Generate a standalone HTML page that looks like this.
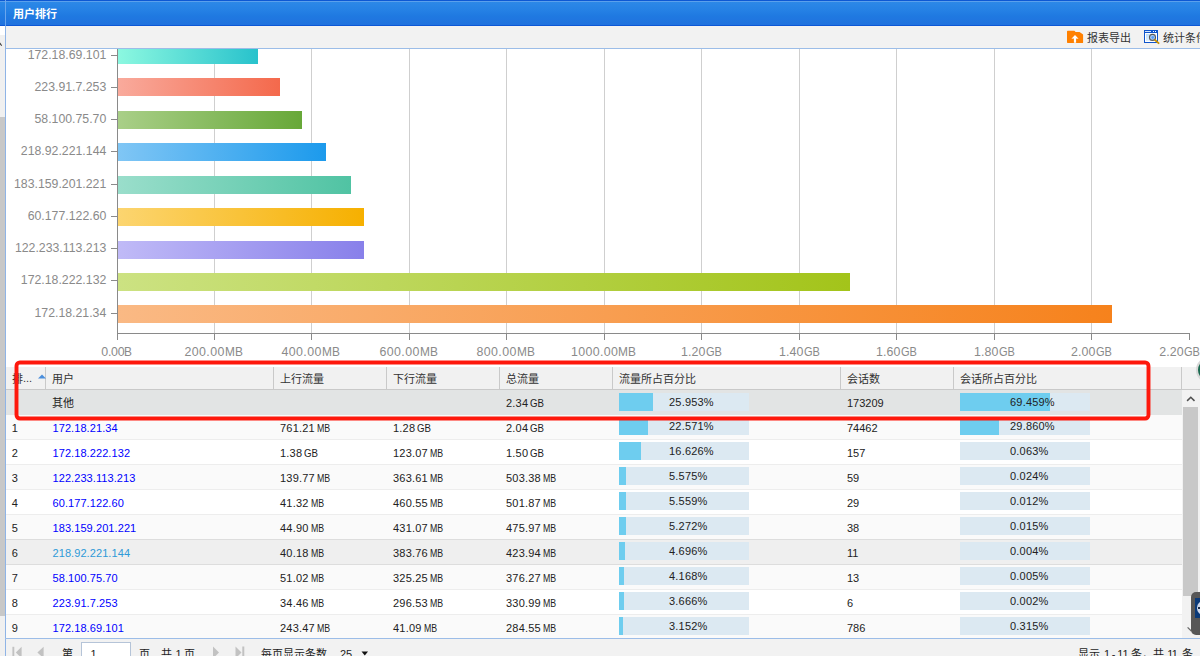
<!DOCTYPE html>
<html><head><meta charset="utf-8"><title>用户排行</title>
<style>
html,body{margin:0;padding:0}
body{width:1200px;height:656px;position:relative;overflow:hidden;background:#fff;font-family:"Liberation Sans",sans-serif}
.t{position:absolute;white-space:nowrap;line-height:1;font-family:"Liberation Sans",sans-serif}
svg{overflow:visible}
svg text{font-family:"Liberation Sans","Noto Sans CJK SC",sans-serif}
.v{display:inline-block;transform:scaleX(.96);transform-origin:0 50%;margin-right:-0.7px}
.vg{transform:scaleX(.89);margin-right:-2px}
.u{display:inline-block;transform:scaleX(.8);transform-origin:0 50%}
.g{transform:scaleX(.88)}
</style></head><body>
<div style="position:absolute;left:0px;top:0px;width:1200px;height:26px;background:linear-gradient(#0d58d3 0,#0d58d3 1px,#5aa0ec 1px,#5aa0ec 2px,#2c88e7 2px,#2480e4 11px,#1f79e1 16px,#2072de 25px,#0c57d6 25px);"></div>
<div style="position:absolute;left:5px;top:0px;width:1px;height:26px;background:#6aa6ee;"></div>
<svg style="position:absolute;left:13.00px;top:8.42px;" width="44.00" height="13.20"><text x="0" y="9.68" font-size="11" font-weight="bold" fill="#fff">用户排行</text></svg>
<div style="position:absolute;left:6px;top:26px;width:1194px;height:22px;background:#f2f2f2;"></div>
<div style="position:absolute;left:5px;top:48px;width:1195px;height:1px;background:#9cbde8;"></div>
<div style="position:absolute;left:0px;top:26px;width:5px;height:9px;background:#fff;"></div>
<div style="position:absolute;left:0px;top:35px;width:5px;height:82px;background:#f0f0f0;"></div>
<div style="position:absolute;left:0px;top:117px;width:5px;height:499px;background:#c8c8c8;"></div>
<div style="position:absolute;left:0px;top:616px;width:5px;height:40px;background:#f0f0f0;"></div>
<div style="position:absolute;left:5px;top:26px;width:1px;height:630px;background:#8fb4e6;"></div>
<svg style="position:absolute;left:0;top:40px" width="5" height="8" viewBox="0 0 5 8"><path d="M-1.5 6.2 L0.2 3.6 L1.7 5.8" stroke="#444" stroke-width="1.1" fill="none"/></svg>
<svg style="position:absolute;left:1066px;top:29px" width="18" height="16" viewBox="1066 29 18 16">
<path d="M1067 31.6 Q1067 30.8 1067.8 30.8 L1074.4 30.8 L1075.6 32 L1079.6 32 L1083.1 34.6 L1083.1 42.4 Q1083.1 43 1082.4 43 L1067.7 43 Q1067 43 1067 42.3 Z" fill="#ff8000"/>
<path d="M1075 35 L1078.6 38.8 L1076.1 38.4 L1076.1 42.8 L1073.9 42.8 L1073.9 38.4 L1071.4 38.8 Z" fill="#fff"/>
</svg>
<svg style="position:absolute;left:1143px;top:29px" width="18" height="16" viewBox="1143 29 18 16">
<defs><linearGradient id="wg" x1="0" y1="0" x2="1" y2="1"><stop offset="0" stop-color="#b8dcfa"/><stop offset="1" stop-color="#fff"/></linearGradient></defs>
<rect x="1144" y="30" width="14" height="13" fill="#0f55cc"/>
<rect x="1145" y="33" width="12" height="9" fill="#fff"/>
<rect x="1146" y="34" width="10" height="7" fill="url(#wg)"/>
<rect x="1145" y="31" width="6" height="1" fill="#cfe4ff"/>
<rect x="1153" y="31" width="1" height="1" fill="#fff"/><rect x="1155" y="31" width="1" height="1" fill="#fff"/>
<circle cx="1152.5" cy="37.4" r="3.0" fill="#b4d8ff" stroke="#5a5a5a" stroke-width="1.1"/>
<circle cx="1152.7" cy="37.5" r="1.4" fill="#5c9ef6"/>
<path d="M1155 40 L1158.6 43.2" stroke="#c89000" stroke-width="1.8" stroke-linecap="round"/>
</svg>
<svg style="position:absolute;left:1087.00px;top:31.72px;" width="44.00" height="13.20"><text x="0" y="9.68" font-size="11" fill="#333">报表导出</text></svg>
<svg style="position:absolute;left:1162.50px;top:31.72px;" width="44.00" height="13.20"><text x="0" y="9.68" font-size="11" fill="#333">统计条件</text></svg>
<div style="position:absolute;left:6px;top:49px;width:1194px;height:318px;overflow:hidden;background:#fff">
<div style="position:absolute;left:-6px;top:-49px;width:1200px;height:656px">
<div style="position:absolute;left:214px;top:40px;width:1px;height:293px;background:#cfcfcf;"></div>
<div style="position:absolute;left:311px;top:40px;width:1px;height:293px;background:#cfcfcf;"></div>
<div style="position:absolute;left:409px;top:40px;width:1px;height:293px;background:#cfcfcf;"></div>
<div style="position:absolute;left:506px;top:40px;width:1px;height:293px;background:#cfcfcf;"></div>
<div style="position:absolute;left:604px;top:40px;width:1px;height:293px;background:#cfcfcf;"></div>
<div style="position:absolute;left:701px;top:40px;width:1px;height:293px;background:#cfcfcf;"></div>
<div style="position:absolute;left:799px;top:40px;width:1px;height:293px;background:#cfcfcf;"></div>
<div style="position:absolute;left:896px;top:40px;width:1px;height:293px;background:#cfcfcf;"></div>
<div style="position:absolute;left:994px;top:40px;width:1px;height:293px;background:#cfcfcf;"></div>
<div style="position:absolute;left:1091px;top:40px;width:1px;height:293px;background:#cfcfcf;"></div>
<div style="position:absolute;left:117px;top:40px;width:1px;height:294px;background:#8a8a8a;"></div>
<div style="position:absolute;left:117px;top:333px;width:1073px;height:1px;background:#8a8a8a;"></div>
<div style="position:absolute;left:117px;top:333px;width:1px;height:7px;background:#8a8a8a;"></div>
<div style="position:absolute;left:214px;top:333px;width:1px;height:7px;background:#8a8a8a;"></div>
<div style="position:absolute;left:311px;top:333px;width:1px;height:7px;background:#8a8a8a;"></div>
<div style="position:absolute;left:409px;top:333px;width:1px;height:7px;background:#8a8a8a;"></div>
<div style="position:absolute;left:506px;top:333px;width:1px;height:7px;background:#8a8a8a;"></div>
<div style="position:absolute;left:604px;top:333px;width:1px;height:7px;background:#8a8a8a;"></div>
<div style="position:absolute;left:701px;top:333px;width:1px;height:7px;background:#8a8a8a;"></div>
<div style="position:absolute;left:799px;top:333px;width:1px;height:7px;background:#8a8a8a;"></div>
<div style="position:absolute;left:896px;top:333px;width:1px;height:7px;background:#8a8a8a;"></div>
<div style="position:absolute;left:994px;top:333px;width:1px;height:7px;background:#8a8a8a;"></div>
<div style="position:absolute;left:1091px;top:333px;width:1px;height:7px;background:#8a8a8a;"></div>
<div style="position:absolute;left:1189px;top:333px;width:1px;height:7px;background:#8a8a8a;"></div>
<div style="position:absolute;left:118px;top:46px;width:140px;height:17.8px;background:linear-gradient(90deg,#8cf8e0,#28c2cc)"></div>
<div style="position:absolute;left:111px;top:55px;width:6px;height:1px;background:#8a8a8a;"></div>
<div class="t" style="right:1093.70px;top:48.59px;font-size:12.3px;color:#8a8a8a;">172.18.69.101</div>
<div style="position:absolute;left:118px;top:78px;width:162px;height:17.8px;background:linear-gradient(90deg,#f9aa9c,#f4694c)"></div>
<div style="position:absolute;left:111px;top:87px;width:6px;height:1px;background:#8a8a8a;"></div>
<div class="t" style="right:1093.70px;top:80.59px;font-size:12.3px;color:#8a8a8a;">223.91.7.253</div>
<div style="position:absolute;left:118px;top:111px;width:184px;height:17.8px;background:linear-gradient(90deg,#a9cf88,#67a838)"></div>
<div style="position:absolute;left:111px;top:119px;width:6px;height:1px;background:#8a8a8a;"></div>
<div class="t" style="right:1093.70px;top:112.59px;font-size:12.3px;color:#8a8a8a;">58.100.75.70</div>
<div style="position:absolute;left:118px;top:143px;width:208px;height:17.8px;background:linear-gradient(90deg,#80c6f5,#1c9aec)"></div>
<div style="position:absolute;left:111px;top:151px;width:6px;height:1px;background:#8a8a8a;"></div>
<div class="t" style="right:1093.70px;top:144.59px;font-size:12.3px;color:#8a8a8a;">218.92.221.144</div>
<div style="position:absolute;left:118px;top:176px;width:233px;height:17.8px;background:linear-gradient(90deg,#9adecb,#50c3a3)"></div>
<div style="position:absolute;left:111px;top:184px;width:6px;height:1px;background:#8a8a8a;"></div>
<div class="t" style="right:1093.70px;top:177.59px;font-size:12.3px;color:#8a8a8a;">183.159.201.221</div>
<div style="position:absolute;left:118px;top:208px;width:246px;height:17.8px;background:linear-gradient(90deg,#fcd570,#f6b000)"></div>
<div style="position:absolute;left:111px;top:216px;width:6px;height:1px;background:#8a8a8a;"></div>
<div class="t" style="right:1093.70px;top:209.59px;font-size:12.3px;color:#8a8a8a;">60.177.122.60</div>
<div style="position:absolute;left:118px;top:241px;width:246px;height:17.8px;background:linear-gradient(90deg,#c0baf7,#8880ea)"></div>
<div style="position:absolute;left:111px;top:248px;width:6px;height:1px;background:#8a8a8a;"></div>
<div class="t" style="right:1093.70px;top:241.59px;font-size:12.3px;color:#8a8a8a;">122.233.113.213</div>
<div style="position:absolute;left:118px;top:273px;width:732px;height:17.8px;background:linear-gradient(90deg,#cce282,#a3c41a)"></div>
<div style="position:absolute;left:111px;top:280px;width:6px;height:1px;background:#8a8a8a;"></div>
<div class="t" style="right:1093.70px;top:273.59px;font-size:12.3px;color:#8a8a8a;">172.18.222.132</div>
<div style="position:absolute;left:118px;top:305px;width:994px;height:17.8px;background:linear-gradient(90deg,#fab984,#f6821c)"></div>
<div style="position:absolute;left:111px;top:313px;width:6px;height:1px;background:#8a8a8a;"></div>
<div class="t" style="right:1093.70px;top:306.59px;font-size:12.3px;color:#8a8a8a;">172.18.21.34</div>
<div class="t" style="left:-33.40px;width:300px;text-align:center;top:346.00px;font-size:12.4px;color:#8a8a8a;"><span style="letter-spacing:-0.3px">0.00</span><span class="v">B</span></div>
<div class="t" style="left:63.60px;width:300px;text-align:center;top:346.00px;font-size:12.4px;color:#8a8a8a;"><span style="letter-spacing:0.37px">200.00</span><span class="v">MB</span></div>
<div class="t" style="left:160.60px;width:300px;text-align:center;top:346.00px;font-size:12.4px;color:#8a8a8a;"><span style="letter-spacing:0.37px">400.00</span><span class="v">MB</span></div>
<div class="t" style="left:258.60px;width:300px;text-align:center;top:346.00px;font-size:12.4px;color:#8a8a8a;"><span style="letter-spacing:0.37px">600.00</span><span class="v">MB</span></div>
<div class="t" style="left:355.60px;width:300px;text-align:center;top:346.00px;font-size:12.4px;color:#8a8a8a;"><span style="letter-spacing:0.37px">800.00</span><span class="v">MB</span></div>
<div class="t" style="left:453.60px;width:300px;text-align:center;top:346.00px;font-size:12.4px;color:#8a8a8a;"><span style="letter-spacing:0.37px">1000.00</span><span class="v">MB</span></div>
<div class="t" style="left:551.30px;width:300px;text-align:center;top:346.00px;font-size:12.4px;color:#8a8a8a;"><span style="letter-spacing:0.1px">1.20</span><span class="v vg">GB</span></div>
<div class="t" style="left:649.30px;width:300px;text-align:center;top:346.00px;font-size:12.4px;color:#8a8a8a;"><span style="letter-spacing:0.1px">1.40</span><span class="v vg">GB</span></div>
<div class="t" style="left:746.30px;width:300px;text-align:center;top:346.00px;font-size:12.4px;color:#8a8a8a;"><span style="letter-spacing:0.1px">1.60</span><span class="v vg">GB</span></div>
<div class="t" style="left:844.30px;width:300px;text-align:center;top:346.00px;font-size:12.4px;color:#8a8a8a;"><span style="letter-spacing:0.1px">1.80</span><span class="v vg">GB</span></div>
<div class="t" style="left:941.30px;width:300px;text-align:center;top:346.00px;font-size:12.4px;color:#8a8a8a;"><span style="letter-spacing:0.1px">2.00</span><span class="v vg">GB</span></div>
<div class="t" style="right:0.40px;top:346.00px;font-size:12.4px;color:#8a8a8a;"><span style="letter-spacing:0.1px">2.20</span><span class="v vg">GB</span></div>
</div></div>
<div style="position:absolute;left:6px;top:367px;width:1194px;height:22px;background:#f1f1f1;"></div>
<div style="position:absolute;left:6px;top:389px;width:1194px;height:1px;background:#c9c9c9;"></div>
<div style="position:absolute;left:45px;top:367px;width:1px;height:22px;background:#c9c9c9;"></div>
<div style="position:absolute;left:273px;top:367px;width:1px;height:22px;background:#c9c9c9;"></div>
<div style="position:absolute;left:386px;top:367px;width:1px;height:22px;background:#c9c9c9;"></div>
<div style="position:absolute;left:499px;top:367px;width:1px;height:22px;background:#c9c9c9;"></div>
<div style="position:absolute;left:612px;top:367px;width:1px;height:22px;background:#c9c9c9;"></div>
<div style="position:absolute;left:840px;top:367px;width:1px;height:22px;background:#c9c9c9;"></div>
<div style="position:absolute;left:953px;top:367px;width:1px;height:22px;background:#c9c9c9;"></div>
<div style="position:absolute;left:1181px;top:367px;width:1px;height:22px;background:#c9c9c9;"></div>
<svg style="position:absolute;left:52.00px;top:372.52px;" width="22.00" height="13.20"><text x="0" y="9.68" font-size="11" fill="#333">用户</text></svg>
<svg style="position:absolute;left:280.00px;top:372.52px;" width="44.00" height="13.20"><text x="0" y="9.68" font-size="11" fill="#333">上行流量</text></svg>
<svg style="position:absolute;left:393.00px;top:372.52px;" width="44.00" height="13.20"><text x="0" y="9.68" font-size="11" fill="#333">下行流量</text></svg>
<svg style="position:absolute;left:506.00px;top:372.52px;" width="33.00" height="13.20"><text x="0" y="9.68" font-size="11" fill="#333">总流量</text></svg>
<svg style="position:absolute;left:619.00px;top:372.52px;" width="77.00" height="13.20"><text x="0" y="9.68" font-size="11" fill="#333">流量所占百分比</text></svg>
<svg style="position:absolute;left:847.00px;top:372.52px;" width="33.00" height="13.20"><text x="0" y="9.68" font-size="11" fill="#333">会话数</text></svg>
<svg style="position:absolute;left:960.00px;top:372.52px;" width="77.00" height="13.20"><text x="0" y="9.68" font-size="11" fill="#333">会话所占百分比</text></svg>
<svg style="position:absolute;left:11.50px;top:372.52px;" width="11.00" height="13.20"><text x="0" y="9.68" font-size="11" fill="#333">排</text></svg>
<div class="t" style="left:23.00px;top:373.09px;font-size:11px;color:#333;">...</div>
<svg style="position:absolute;left:37.5px;top:374.3px" width="8" height="5" viewBox="0 0 8 5"><path d="M0 4.6 L4 0.4 L8 4.6 Z" fill="#4a8edc"/></svg>
<div style="position:absolute;left:6px;top:390px;width:1176px;height:25px;background:#e2e4e4;"></div>
<svg style="position:absolute;left:52.00px;top:397.12px;" width="22.00" height="13.20"><text x="0" y="9.68" font-size="11" fill="#222">其他</text></svg>
<div class="t" style="left:506.00px;top:398.19px;font-size:11px;color:#222;"><span style="letter-spacing:0.2px;word-spacing:-1.2px">2.34 </span><span class="u g">GB</span></div>
<div class="t" style="left:847.00px;top:398.19px;font-size:11px;color:#222;">173209</div>
<div style="position:absolute;left:619px;top:393px;width:130px;height:18px;background:#dce9f2;"></div>
<div style="position:absolute;left:619px;top:393px;width:34px;height:18px;background:#6ecdef;"></div>
<div class="t" style="left:669.00px;top:396.69px;font-size:11px;color:#222;letter-spacing:0.2px;">25.953%</div>
<div style="position:absolute;left:960px;top:393px;width:130px;height:18px;background:#dce9f2;"></div>
<div style="position:absolute;left:960px;top:393px;width:90px;height:18px;background:#6ecdef;"></div>
<div class="t" style="left:1010.00px;top:396.69px;font-size:11px;color:#222;letter-spacing:0.2px;">69.459%</div>
<div style="position:absolute;left:6px;top:415px;width:1176px;height:24px;background:#fafafa;"></div>
<div style="position:absolute;left:6px;top:439px;width:1176px;height:1px;background:#ededed;"></div>
<div class="t" style="left:11.80px;top:423.49px;font-size:11px;color:#222;">1</div>
<div class="t" style="left:52.50px;top:423.49px;font-size:11px;color:#0000ff;letter-spacing:0.08px;">172.18.21.34</div>
<div class="t" style="left:280.00px;top:423.49px;font-size:11px;color:#222;"><span style="letter-spacing:0.2px;word-spacing:-1.2px">761.21 </span><span class="u">MB</span></div>
<div class="t" style="left:393.00px;top:423.49px;font-size:11px;color:#222;"><span style="letter-spacing:0.2px;word-spacing:-1.2px">1.28 </span><span class="u g">GB</span></div>
<div class="t" style="left:506.00px;top:423.49px;font-size:11px;color:#222;"><span style="letter-spacing:0.2px;word-spacing:-1.2px">2.04 </span><span class="u g">GB</span></div>
<div style="position:absolute;left:619px;top:417px;width:130px;height:18px;background:#dce9f2;"></div>
<div style="position:absolute;left:619px;top:417px;width:29px;height:18px;background:#6ecdef;"></div>
<div class="t" style="left:669.00px;top:420.69px;font-size:11px;color:#222;letter-spacing:0.2px;">22.571%</div>
<div class="t" style="left:847.00px;top:423.49px;font-size:11px;color:#222;">74462</div>
<div style="position:absolute;left:960px;top:417px;width:130px;height:18px;background:#dce9f2;"></div>
<div style="position:absolute;left:960px;top:417px;width:39px;height:18px;background:#6ecdef;"></div>
<div class="t" style="left:1010.00px;top:420.69px;font-size:11px;color:#222;letter-spacing:0.2px;">29.860%</div>
<div style="position:absolute;left:6px;top:440px;width:1176px;height:24px;background:#fff;"></div>
<div style="position:absolute;left:6px;top:464px;width:1176px;height:1px;background:#ededed;"></div>
<div class="t" style="left:11.80px;top:448.49px;font-size:11px;color:#222;">2</div>
<div class="t" style="left:52.50px;top:448.49px;font-size:11px;color:#0000ff;letter-spacing:0.08px;">172.18.222.132</div>
<div class="t" style="left:280.00px;top:448.49px;font-size:11px;color:#222;"><span style="letter-spacing:0.2px;word-spacing:-1.2px">1.38 </span><span class="u g">GB</span></div>
<div class="t" style="left:393.00px;top:448.49px;font-size:11px;color:#222;"><span style="letter-spacing:0.2px;word-spacing:-1.2px">123.07 </span><span class="u">MB</span></div>
<div class="t" style="left:506.00px;top:448.49px;font-size:11px;color:#222;"><span style="letter-spacing:0.2px;word-spacing:-1.2px">1.50 </span><span class="u g">GB</span></div>
<div style="position:absolute;left:619px;top:442px;width:130px;height:18px;background:#dce9f2;"></div>
<div style="position:absolute;left:619px;top:442px;width:22px;height:18px;background:#6ecdef;"></div>
<div class="t" style="left:669.00px;top:445.69px;font-size:11px;color:#222;letter-spacing:0.2px;">16.626%</div>
<div class="t" style="left:847.00px;top:448.49px;font-size:11px;color:#222;">157</div>
<div style="position:absolute;left:960px;top:442px;width:130px;height:18px;background:#dce9f2;"></div>
<div style="position:absolute;left:960px;top:442px;width:0px;height:18px;background:#6ecdef;"></div>
<div class="t" style="left:1010.00px;top:445.69px;font-size:11px;color:#222;letter-spacing:0.2px;">0.063%</div>
<div style="position:absolute;left:6px;top:465px;width:1176px;height:24px;background:#fafafa;"></div>
<div style="position:absolute;left:6px;top:489px;width:1176px;height:1px;background:#ededed;"></div>
<div class="t" style="left:11.80px;top:473.49px;font-size:11px;color:#222;">3</div>
<div class="t" style="left:52.50px;top:473.49px;font-size:11px;color:#0000ff;letter-spacing:0.08px;">122.233.113.213</div>
<div class="t" style="left:280.00px;top:473.49px;font-size:11px;color:#222;"><span style="letter-spacing:0.2px;word-spacing:-1.2px">139.77 </span><span class="u">MB</span></div>
<div class="t" style="left:393.00px;top:473.49px;font-size:11px;color:#222;"><span style="letter-spacing:0.2px;word-spacing:-1.2px">363.61 </span><span class="u">MB</span></div>
<div class="t" style="left:506.00px;top:473.49px;font-size:11px;color:#222;"><span style="letter-spacing:0.2px;word-spacing:-1.2px">503.38 </span><span class="u">MB</span></div>
<div style="position:absolute;left:619px;top:467px;width:130px;height:18px;background:#dce9f2;"></div>
<div style="position:absolute;left:619px;top:467px;width:7px;height:18px;background:#6ecdef;"></div>
<div class="t" style="left:669.00px;top:470.69px;font-size:11px;color:#222;letter-spacing:0.2px;">5.575%</div>
<div class="t" style="left:847.00px;top:473.49px;font-size:11px;color:#222;">59</div>
<div style="position:absolute;left:960px;top:467px;width:130px;height:18px;background:#dce9f2;"></div>
<div style="position:absolute;left:960px;top:467px;width:0px;height:18px;background:#6ecdef;"></div>
<div class="t" style="left:1010.00px;top:470.69px;font-size:11px;color:#222;letter-spacing:0.2px;">0.024%</div>
<div style="position:absolute;left:6px;top:490px;width:1176px;height:24px;background:#fff;"></div>
<div style="position:absolute;left:6px;top:514px;width:1176px;height:1px;background:#ededed;"></div>
<div class="t" style="left:11.80px;top:498.49px;font-size:11px;color:#222;">4</div>
<div class="t" style="left:52.50px;top:498.49px;font-size:11px;color:#0000ff;letter-spacing:0.08px;">60.177.122.60</div>
<div class="t" style="left:280.00px;top:498.49px;font-size:11px;color:#222;"><span style="letter-spacing:0.2px;word-spacing:-1.2px">41.32 </span><span class="u">MB</span></div>
<div class="t" style="left:393.00px;top:498.49px;font-size:11px;color:#222;"><span style="letter-spacing:0.2px;word-spacing:-1.2px">460.55 </span><span class="u">MB</span></div>
<div class="t" style="left:506.00px;top:498.49px;font-size:11px;color:#222;"><span style="letter-spacing:0.2px;word-spacing:-1.2px">501.87 </span><span class="u">MB</span></div>
<div style="position:absolute;left:619px;top:492px;width:130px;height:18px;background:#dce9f2;"></div>
<div style="position:absolute;left:619px;top:492px;width:7px;height:18px;background:#6ecdef;"></div>
<div class="t" style="left:669.00px;top:495.69px;font-size:11px;color:#222;letter-spacing:0.2px;">5.559%</div>
<div class="t" style="left:847.00px;top:498.49px;font-size:11px;color:#222;">29</div>
<div style="position:absolute;left:960px;top:492px;width:130px;height:18px;background:#dce9f2;"></div>
<div style="position:absolute;left:960px;top:492px;width:0px;height:18px;background:#6ecdef;"></div>
<div class="t" style="left:1010.00px;top:495.69px;font-size:11px;color:#222;letter-spacing:0.2px;">0.012%</div>
<div style="position:absolute;left:6px;top:515px;width:1176px;height:24px;background:#fafafa;"></div>
<div style="position:absolute;left:6px;top:539px;width:1176px;height:1px;background:#dddddd;"></div>
<div class="t" style="left:11.80px;top:523.49px;font-size:11px;color:#222;">5</div>
<div class="t" style="left:52.50px;top:523.49px;font-size:11px;color:#0000ff;letter-spacing:0.08px;">183.159.201.221</div>
<div class="t" style="left:280.00px;top:523.49px;font-size:11px;color:#222;"><span style="letter-spacing:0.2px;word-spacing:-1.2px">44.90 </span><span class="u">MB</span></div>
<div class="t" style="left:393.00px;top:523.49px;font-size:11px;color:#222;"><span style="letter-spacing:0.2px;word-spacing:-1.2px">431.07 </span><span class="u">MB</span></div>
<div class="t" style="left:506.00px;top:523.49px;font-size:11px;color:#222;"><span style="letter-spacing:0.2px;word-spacing:-1.2px">475.97 </span><span class="u">MB</span></div>
<div style="position:absolute;left:619px;top:517px;width:130px;height:18px;background:#dce9f2;"></div>
<div style="position:absolute;left:619px;top:517px;width:7px;height:18px;background:#6ecdef;"></div>
<div class="t" style="left:669.00px;top:520.69px;font-size:11px;color:#222;letter-spacing:0.2px;">5.272%</div>
<div class="t" style="left:847.00px;top:523.49px;font-size:11px;color:#222;">38</div>
<div style="position:absolute;left:960px;top:517px;width:130px;height:18px;background:#dce9f2;"></div>
<div style="position:absolute;left:960px;top:517px;width:0px;height:18px;background:#6ecdef;"></div>
<div class="t" style="left:1010.00px;top:520.69px;font-size:11px;color:#222;letter-spacing:0.2px;">0.015%</div>
<div style="position:absolute;left:6px;top:540px;width:1176px;height:24px;background:#efefef;"></div>
<div style="position:absolute;left:6px;top:564px;width:1176px;height:1px;background:#dddddd;"></div>
<div class="t" style="left:11.80px;top:548.49px;font-size:11px;color:#222;">6</div>
<div class="t" style="left:52.50px;top:548.49px;font-size:11px;color:#2e9ad8;letter-spacing:0.08px;">218.92.221.144</div>
<div class="t" style="left:280.00px;top:548.49px;font-size:11px;color:#222;"><span style="letter-spacing:0.2px;word-spacing:-1.2px">40.18 </span><span class="u">MB</span></div>
<div class="t" style="left:393.00px;top:548.49px;font-size:11px;color:#222;"><span style="letter-spacing:0.2px;word-spacing:-1.2px">383.76 </span><span class="u">MB</span></div>
<div class="t" style="left:506.00px;top:548.49px;font-size:11px;color:#222;"><span style="letter-spacing:0.2px;word-spacing:-1.2px">423.94 </span><span class="u">MB</span></div>
<div style="position:absolute;left:619px;top:542px;width:130px;height:18px;background:#dce9f2;"></div>
<div style="position:absolute;left:619px;top:542px;width:6px;height:18px;background:#6ecdef;"></div>
<div class="t" style="left:669.00px;top:545.69px;font-size:11px;color:#222;letter-spacing:0.2px;">4.696%</div>
<div class="t" style="left:847.00px;top:548.49px;font-size:11px;color:#222;">11</div>
<div style="position:absolute;left:960px;top:542px;width:130px;height:18px;background:#dce9f2;"></div>
<div style="position:absolute;left:960px;top:542px;width:0px;height:18px;background:#6ecdef;"></div>
<div class="t" style="left:1010.00px;top:545.69px;font-size:11px;color:#222;letter-spacing:0.2px;">0.004%</div>
<div style="position:absolute;left:6px;top:565px;width:1176px;height:24px;background:#fafafa;"></div>
<div style="position:absolute;left:6px;top:589px;width:1176px;height:1px;background:#ededed;"></div>
<div class="t" style="left:11.80px;top:573.49px;font-size:11px;color:#222;">7</div>
<div class="t" style="left:52.50px;top:573.49px;font-size:11px;color:#0000ff;letter-spacing:0.08px;">58.100.75.70</div>
<div class="t" style="left:280.00px;top:573.49px;font-size:11px;color:#222;"><span style="letter-spacing:0.2px;word-spacing:-1.2px">51.02 </span><span class="u">MB</span></div>
<div class="t" style="left:393.00px;top:573.49px;font-size:11px;color:#222;"><span style="letter-spacing:0.2px;word-spacing:-1.2px">325.25 </span><span class="u">MB</span></div>
<div class="t" style="left:506.00px;top:573.49px;font-size:11px;color:#222;"><span style="letter-spacing:0.2px;word-spacing:-1.2px">376.27 </span><span class="u">MB</span></div>
<div style="position:absolute;left:619px;top:567px;width:130px;height:18px;background:#dce9f2;"></div>
<div style="position:absolute;left:619px;top:567px;width:5px;height:18px;background:#6ecdef;"></div>
<div class="t" style="left:669.00px;top:570.69px;font-size:11px;color:#222;letter-spacing:0.2px;">4.168%</div>
<div class="t" style="left:847.00px;top:573.49px;font-size:11px;color:#222;">13</div>
<div style="position:absolute;left:960px;top:567px;width:130px;height:18px;background:#dce9f2;"></div>
<div style="position:absolute;left:960px;top:567px;width:0px;height:18px;background:#6ecdef;"></div>
<div class="t" style="left:1010.00px;top:570.69px;font-size:11px;color:#222;letter-spacing:0.2px;">0.005%</div>
<div style="position:absolute;left:6px;top:590px;width:1176px;height:24px;background:#fff;"></div>
<div style="position:absolute;left:6px;top:614px;width:1176px;height:1px;background:#ededed;"></div>
<div class="t" style="left:11.80px;top:598.49px;font-size:11px;color:#222;">8</div>
<div class="t" style="left:52.50px;top:598.49px;font-size:11px;color:#0000ff;letter-spacing:0.08px;">223.91.7.253</div>
<div class="t" style="left:280.00px;top:598.49px;font-size:11px;color:#222;"><span style="letter-spacing:0.2px;word-spacing:-1.2px">34.46 </span><span class="u">MB</span></div>
<div class="t" style="left:393.00px;top:598.49px;font-size:11px;color:#222;"><span style="letter-spacing:0.2px;word-spacing:-1.2px">296.53 </span><span class="u">MB</span></div>
<div class="t" style="left:506.00px;top:598.49px;font-size:11px;color:#222;"><span style="letter-spacing:0.2px;word-spacing:-1.2px">330.99 </span><span class="u">MB</span></div>
<div style="position:absolute;left:619px;top:592px;width:130px;height:18px;background:#dce9f2;"></div>
<div style="position:absolute;left:619px;top:592px;width:5px;height:18px;background:#6ecdef;"></div>
<div class="t" style="left:669.00px;top:595.69px;font-size:11px;color:#222;letter-spacing:0.2px;">3.666%</div>
<div class="t" style="left:847.00px;top:598.49px;font-size:11px;color:#222;">6</div>
<div style="position:absolute;left:960px;top:592px;width:130px;height:18px;background:#dce9f2;"></div>
<div style="position:absolute;left:960px;top:592px;width:0px;height:18px;background:#6ecdef;"></div>
<div class="t" style="left:1010.00px;top:595.69px;font-size:11px;color:#222;letter-spacing:0.2px;">0.002%</div>
<div style="position:absolute;left:6px;top:615px;width:1176px;height:24px;background:#fafafa;"></div>
<div style="position:absolute;left:6px;top:639px;width:1176px;height:1px;background:#ededed;"></div>
<div class="t" style="left:11.80px;top:623.49px;font-size:11px;color:#222;">9</div>
<div class="t" style="left:52.50px;top:623.49px;font-size:11px;color:#0000ff;letter-spacing:0.08px;">172.18.69.101</div>
<div class="t" style="left:280.00px;top:623.49px;font-size:11px;color:#222;"><span style="letter-spacing:0.2px;word-spacing:-1.2px">243.47 </span><span class="u">MB</span></div>
<div class="t" style="left:393.00px;top:623.49px;font-size:11px;color:#222;"><span style="letter-spacing:0.2px;word-spacing:-1.2px">41.09 </span><span class="u">MB</span></div>
<div class="t" style="left:506.00px;top:623.49px;font-size:11px;color:#222;"><span style="letter-spacing:0.2px;word-spacing:-1.2px">284.55 </span><span class="u">MB</span></div>
<div style="position:absolute;left:619px;top:617px;width:130px;height:18px;background:#dce9f2;"></div>
<div style="position:absolute;left:619px;top:617px;width:4px;height:18px;background:#6ecdef;"></div>
<div class="t" style="left:669.00px;top:620.69px;font-size:11px;color:#222;letter-spacing:0.2px;">3.152%</div>
<div class="t" style="left:847.00px;top:623.49px;font-size:11px;color:#222;">786</div>
<div style="position:absolute;left:960px;top:617px;width:130px;height:18px;background:#dce9f2;"></div>
<div style="position:absolute;left:960px;top:617px;width:0px;height:18px;background:#6ecdef;"></div>
<div class="t" style="left:1010.00px;top:620.69px;font-size:11px;color:#222;letter-spacing:0.2px;">0.315%</div>
<div style="position:absolute;left:1182px;top:390px;width:18px;height:249px;background:#f2f2f2;"></div>
<div style="position:absolute;left:1183px;top:407px;width:15px;height:189px;background:#c8c8c8;"></div>
<svg style="position:absolute;left:1183px;top:390px" width="17" height="17" viewBox="0 0 17 17"><path d="M4.1 10.9 L7.8 7.2 L11.5 10.9" stroke="#505050" stroke-width="1.5" fill="none"/></svg>
<svg style="position:absolute;left:1183px;top:622px" width="17" height="17" viewBox="0 0 17 17"><path d="M4.6 5.4 L7.9 8.7 L11.2 5.4" stroke="#686868" stroke-width="1.3" fill="none"/></svg>
<div style="position:absolute;left:1191px;top:592px;width:20px;height:43px;background:#575757;border-radius:5px"></div>
<div style="position:absolute;left:1195px;top:598px;width:5px;height:20px;background:#0b3a78;"></div>
<div style="position:absolute;left:1196.6px;top:601px;width:13.5px;height:13.5px;border-radius:7px;background:#ccd6e8"></div>
<div style="position:absolute;left:1198px;top:607px;width:2px;height:1.6px;background:#1a2a44;"></div>
<div style="position:absolute;left:1195.5px;top:357px;width:26px;height:26px;border-radius:13px;background:#1a6a50;border:2.5px solid #d8d8d8;box-sizing:border-box"></div>
<div style="position:absolute;left:5px;top:638px;width:1195px;height:1px;background:#9cbde8;"></div>
<div style="position:absolute;left:6px;top:639px;width:1194px;height:17px;background:#f2f2f2;"></div>
<svg style="position:absolute;left:10px;top:644px" width="40" height="12" viewBox="10 644 40 12" fill="#c2c2c2">
<rect x="12.4" y="646.8" width="1.9" height="12"/><path d="M21.6 646.8 L15.8 652.5 L21.6 658.2 Z"/>
<path d="M43.6 646.8 L37.4 652.5 L43.6 658.2 Z"/></svg>
<svg style="position:absolute;left:210px;top:644px" width="40" height="12" viewBox="210 644 40 12" fill="#c2c2c2">
<path d="M213 646.5 L219 652.5 L213 658.5 Z"/>
<path d="M235.5 646.5 L241.5 652.5 L235.5 658.5 Z"/><rect x="242.3" y="646.5" width="2" height="12"/></svg>
<svg style="position:absolute;left:62.00px;top:647.92px;" width="11.00" height="13.20"><text x="0" y="9.68" font-size="11" fill="#222">第</text></svg>
<div style="position:absolute;left:81px;top:642px;width:50px;height:20px;background:#fff;border:1px solid #b5c4d8;box-sizing:border-box"></div>
<div class="t" style="left:90.50px;top:648.69px;font-size:11px;color:#222;">1</div>
<svg style="position:absolute;left:139.00px;top:647.92px;" width="11.00" height="13.20"><text x="0" y="9.68" font-size="11" fill="#222">页</text></svg>
<svg style="position:absolute;left:161.00px;top:647.92px;" width="11.00" height="13.20"><text x="0" y="9.68" font-size="11" fill="#222">共</text></svg>
<div class="t" style="left:175.50px;top:648.69px;font-size:11px;color:#222;">1</div>
<svg style="position:absolute;left:184.00px;top:647.92px;" width="11.00" height="13.20"><text x="0" y="9.68" font-size="11" fill="#222">页</text></svg>
<svg style="position:absolute;left:261.00px;top:647.92px;" width="66.00" height="13.20"><text x="0" y="9.68" font-size="11" fill="#222">每页显示条数</text></svg>
<div class="t" style="left:340.00px;top:648.69px;font-size:11px;color:#222;">25</div>
<svg style="position:absolute;left:361px;top:651px" width="8" height="5" viewBox="0 0 8 5"><path d="M0.5 0.5 L7 0.5 L3.75 4.5 Z" fill="#111"/></svg>
<svg style="position:absolute;left:1078.00px;top:647.92px;" width="22.00" height="13.20"><text x="0" y="9.68" font-size="11" fill="#222">显示</text></svg>
<div class="t" style="left:1104.00px;top:648.69px;font-size:11px;color:#222;word-spacing:-1.3px;">1 - 11</div>
<svg style="position:absolute;left:1130.50px;top:647.92px;" width="33.00" height="13.20"><text x="0" y="9.68" font-size="11" fill="#222">条，共</text></svg>
<div class="t" style="left:1167.30px;top:648.69px;font-size:11px;color:#222;letter-spacing:-0.8px;">11</div>
<svg style="position:absolute;left:1182.00px;top:647.92px;" width="11.00" height="13.20"><text x="0" y="9.68" font-size="11" fill="#222">条</text></svg>
<svg style="position:absolute;left:0;top:350px" width="1200" height="80" viewBox="0 350 1200 80"><rect x="16.5" y="362.5" width="1132" height="56" rx="3.4" fill="none" stroke="#fe180c" stroke-width="3.9"/></svg>
</body></html>
